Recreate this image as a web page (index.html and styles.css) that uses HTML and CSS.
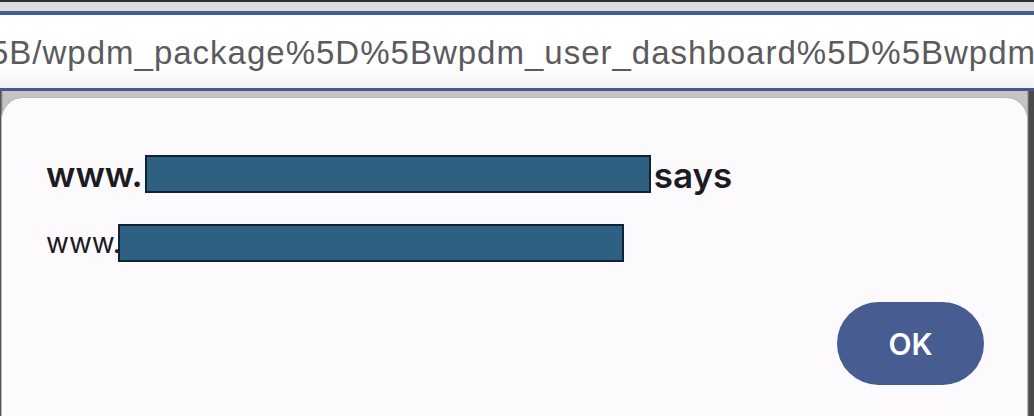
FILE: index.html
```html
<!DOCTYPE html>
<html lang="en">
<head>
    <meta charset="UTF-8">
    <title>Alert</title>
    <link rel="stylesheet" href="styles.css">
</head>
<body>

    <div class="topbar"></div>
    <div class="tabstrip"></div>

    <div class="address">
        <span class="url">5B/wpdm_package%5D%5Bwpdm_user_dashboard%5D%5Bwpdm_package</span>
    </div>

    <div class="backdrop">
        <div class="dialog">
            <div class="title">
                <span>www.</span>
                <span class="redacted wide"></span>
                <span class="says">says</span>
            </div>
            <div class="message">
                <span>www.</span>
                <span class="redacted"></span>
            </div>
            <div class="actions">
                <button class="ok">OK</button>
            </div>
        </div>
    </div>

</body>
</html>
```

FILE: styles.css
```css
body {
    margin: 0;
    height: 416px;
    overflow: hidden;
    display: flex;
    flex-direction: column;
    background: #c4c4c7;
}

.topbar {
    height: 2px;
    background: #2c2f33;
}

.tabstrip {
    height: 9px;
    background: #dcdce0;
}

.address {
    height: 73px;
    border-top: 4px solid #465a8f;
    border-bottom: 3px solid #465a8f;
    background: linear-gradient(#ffffff 70%, #f2f3f5);
    display: flex;
    align-items: center;
    overflow: hidden;
}

.url {
    margin-left: -10px;
    margin-top: 2px;
    white-space: nowrap;
    font-family: "Liberation Sans", Arial, sans-serif;
    font-size: 33px;
    letter-spacing: 1px;
    color: #5b5b5e;
}

.backdrop {
    flex: 1;
    padding: 6px 6px 0 1px;
    background: linear-gradient(to right, #3c3c3e 0, #c4c4c7 3px, #c4c4c7 calc(100% - 7px), #4a4a4c calc(100% - 5px));
    display: flex;
}

.dialog {
    flex: 1;
    background: #fcfafd;
    border: 1px solid #b8b8bb;
    border-bottom: none;
    border-radius: 22px 22px 0 0;
    padding: 57px 43px 0 44px;
    font-family: Inter, "Noto Sans", sans-serif;
    color: #1c1b1f;
}

.title {
    display: flex;
    align-items: center;
    height: 38px;
    font-size: 35px;
    font-weight: 600;
}

.title .redacted {
    margin-left: 2px;
    margin-right: 3px;
}

.says {
    margin-top: 2px;
}

.message {
    display: flex;
    align-items: center;
    height: 38px;
    margin-top: 31px;
    font-size: 28px;
}

.message .redacted {
    margin-left: -3px;
}

.redacted {
    display: inline-block;
    box-sizing: border-box;
    width: 506px;
    height: 38px;
    background: #2e6082;
    border: 2px solid #0f2236;
}

.actions {
    display: flex;
    justify-content: flex-end;
    margin-top: 40px;
}

.ok {
    width: 147px;
    height: 83px;
    border: none;
    border-radius: 42px;
    background: #475d92;
    color: #ffffff;
    font-family: Inter, "Noto Sans", sans-serif;
    font-size: 30px;
    font-weight: 600;
}
```
